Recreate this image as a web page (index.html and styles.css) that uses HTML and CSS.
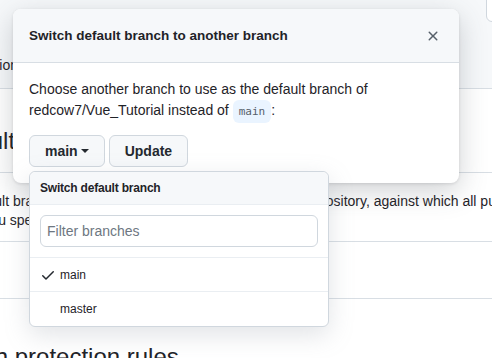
FILE: index.html
```html
<!DOCTYPE html>
<html lang="en">
<head>
  <meta charset="UTF-8">
  <meta name="viewport" content="width=device-width, initial-scale=1.0">
  <title>Branches</title>
  <link rel="stylesheet" href="styles.css">
</head>
<body>

  <!-- settings page behind the dialog -->
  <div class="page">
    <div class="top-box">
      <div class="top-row">
        <span class="top-label">Description</span>
      </div>
      <button class="corner-btn"></button>
    </div>

    <h2 class="subhead">Default branch</h2>
    <p class="page-text">The default branch is considered the “base” branch in your repository, against which all pull requests and code commits are automatically made,<br>unless you specify a different branch.</p>

    <div class="branch-box"></div>

    <h2 class="subhead plain">Branch protection rules</h2>
  </div>

  <!-- switch default branch dialog -->
  <div class="dialog">
    <div class="dialog-header">
      <h3 class="dialog-title">Switch default branch to another branch</h3>
      <button class="close-btn" aria-label="Close">
        <svg width="16" height="16" viewBox="0 0 16 16"><path d="M3.72 3.72a.75.75 0 0 1 1.06 0L8 6.94l3.22-3.22a.749.749 0 0 1 1.275.326.749.749 0 0 1-.215.734L9.06 8l3.22 3.22a.749.749 0 0 1-.326 1.275.749.749 0 0 1-.734-.215L8 9.06l-3.22 3.22a.751.751 0 0 1-1.042-.018.751.751 0 0 1-.018-1.042L6.94 8 3.72 4.78a.75.75 0 0 1 0-1.06Z"></path></svg>
      </button>
    </div>
    <div class="dialog-body">
      <p class="dialog-text">Choose another branch to use as the default branch of redcow7/Vue_Tutorial instead of <code class="code">main</code>:</p>
      <div class="actions">
        <div class="picker">
          <button class="btn">main<span class="caret"></span></button>

          <div class="menu">
            <div class="menu-header">Switch default branch</div>
            <div class="menu-filter">
              <input class="filter-input" type="text" placeholder="Filter branches">
            </div>
            <div class="menu-item">
              <svg class="check" width="16" height="16" viewBox="0 0 16 16"><path d="M13.78 4.22a.75.75 0 0 1 0 1.06l-7.25 7.25a.75.75 0 0 1-1.06 0L2.22 9.28a.751.751 0 0 1 .018-1.042.751.751 0 0 1 1.042-.018L6 10.940l6.72-6.72a.75.75 0 0 1 1.06 0Z"></path></svg>
              <span>main</span>
            </div>
            <div class="menu-item last">
              <span class="check-space"></span>
              <span>master</span>
            </div>
          </div>
        </div>
        <button class="btn">Update</button>
      </div>
    </div>
  </div>

</body>
</html>
```

FILE: styles.css
```css
body {
  margin: 0;
  font-family: "Liberation Sans", Arial, sans-serif;
  font-size: 14px;
  color: #1f2328;
  background: #fff;
  overflow: hidden;
  height: 358px;
  position: relative;
}

/* page behind */
.page {
  margin-left: -61px;
  width: 1100px;
}

.top-box {
  height: 88px;
  background: #f6f8fa;
  border-bottom: 1px solid #d8dee4;
  position: relative;
}

.top-row {
  padding-top: 57px;
  padding-left: 9px;
}

.corner-btn {
  position: absolute;
  top: -10px;
  left: 547px;
  width: 40px;
  height: 32px;
  background: #fff;
  border: 1px solid #d0d7de;
  border-radius: 6px;
}

.subhead {
  margin: 0;
  padding: 37px 0 16px;
  font-size: 24px;
  font-weight: 400;
  line-height: 30px;
  border-bottom: 1px solid #d8dee4;
}

.subhead.plain {
  border-bottom: none;
  padding-top: 43px;
  margin-left: -7px;
}

.page-text {
  margin: 19px 0 0;
  line-height: 19px;
}

.branch-box {
  margin-top: 11px;
  height: 56px;
  border-top: 1px solid #d8dee4;
  border-bottom: 1px solid #d8dee4;
}

/* dialog */
.dialog {
  position: absolute;
  top: 9px;
  left: 13px;
  width: 446px;
  background: #fff;
  border-radius: 8px;
  box-shadow: 0 1px 3px rgba(31, 35, 40, 0.12), 0 8px 28px rgba(66, 74, 83, 0.25);
}

.dialog-header {
  display: flex;
  align-items: center;
  justify-content: space-between;
  height: 53px;
  padding: 0 16px;
  background: #f6f8fa;
  border-bottom: 1px solid #d8dee4;
  border-radius: 8px 8px 0 0;
}

.dialog-title {
  margin: 0;
  font-size: 13.5px;
  font-weight: 600;
}

.close-btn {
  display: flex;
  padding: 0;
  margin-right: 2px;
  background: none;
  border: none;
  fill: #57606a;
}

.dialog-body {
  padding: 16px;
}

.dialog-text {
  margin: 0 0 13px;
  line-height: 21px;
}

.code {
  font-family: "DejaVu Sans Mono", "Liberation Mono", monospace;
  font-size: 11px;
  color: #57606a;
  background: #eaf4ff;
  padding: 5px 6px;
  border-radius: 6px;
}

.actions {
  display: flex;
  gap: 4px;
}

.picker {
  position: relative;
}

.btn {
  height: 32px;
  padding: 0 15px;
  font-family: inherit;
  font-size: 14px;
  font-weight: 600;
  color: #24292f;
  background: #f6f8fa;
  border: 1px solid #d0d7de;
  border-radius: 6px;
  display: flex;
  align-items: center;
  gap: 3px;
}

.caret {
  width: 0;
  height: 0;
  border-top: 4px solid #24292f;
  border-left: 4px solid transparent;
  border-right: 4px solid transparent;
}

/* branch menu */
.menu {
  position: absolute;
  top: 36px;
  left: 0;
  width: 298px;
  background: #fff;
  border: 1px solid #d0d7de;
  border-radius: 6px;
  box-shadow: 0 8px 24px rgba(140, 149, 159, 0.25);
  z-index: 10;
}

.menu-header {
  height: 32px;
  padding: 0 10px;
  display: flex;
  align-items: center;
  font-size: 12px;
  font-weight: 600;
  letter-spacing: -0.2px;
  background: #f6f8fa;
  border-bottom: 1px solid #eaeef2;
  border-radius: 6px 6px 0 0;
}

.menu-filter {
  padding: 10px;
  border-bottom: 1px solid #eaeef2;
}

.filter-input {
  box-sizing: border-box;
  width: 100%;
  height: 32px;
  padding: 0 6px;
  font-family: inherit;
  font-size: 14px;
  border: 1px solid #d0d7de;
  border-radius: 6px;
  outline: none;
}

.filter-input::placeholder {
  color: #6e7781;
}

.menu-item {
  height: 33px;
  padding: 0 10px;
  display: flex;
  align-items: center;
  gap: 4px;
  font-size: 12px;
  border-bottom: 1px solid #eaeef2;
}

.menu-item.last {
  border-bottom: none;
  height: 34px;
}

.check {
  fill: #24292f;
}

.check-space {
  width: 16px;
}
```
